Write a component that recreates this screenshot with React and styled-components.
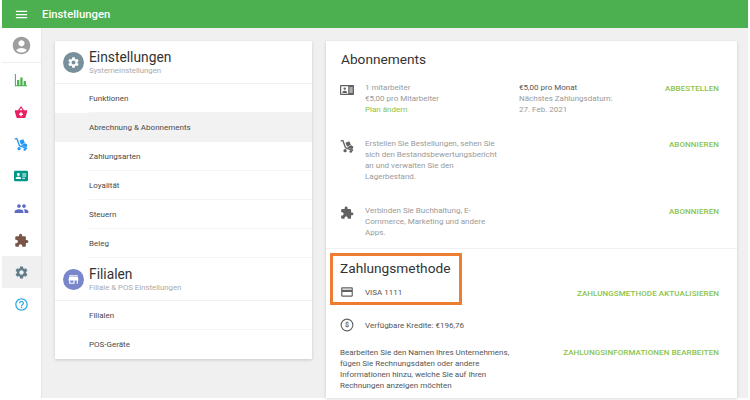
import React from 'react';
import styled, { createGlobalStyle } from 'styled-components';
import { MdMenu, MdAccountCircle, MdPeople, MdExtension, MdSettings, MdHelpOutline, MdStore, MdCreditCard } from 'react-icons/md';

const Global = createGlobalStyle`
  html, body { margin: 0; padding: 0; background: #fff; }
  body { font-family: Roboto, "Liberation Sans", sans-serif; }
  * { box-sizing: border-box; }
`;

const Frame = styled.div`
  position: relative;
  width: 750px;
  height: 400px;
  padding: 0 2px 2px;
  overflow: hidden;
  display: flex;
  flex-direction: column;
`;
const TopBar = styled.header`
  height: 28px;
  flex: none;
  background: #4caf50;
  color: #fff;
  display: flex;
  align-items: center;
  padding-left: 12px;
  gap: 13px;
  font-size: 11.3px;
  font-weight: 500;
  svg { font-size: 15px; }
`;
const Body = styled.div`
  flex: 1;
  min-height: 0;
  display: flex;
  background: #f0f0f0;
`;
const Rail = styled.nav`
  width: 39px;
  flex: none;
  background: #fff;
  display: flex;
  flex-direction: column;
  box-shadow: 1px 0 1px rgba(0,0,0,.04);
`;
const Avatar = styled.div`
  height: 35px;
  display: flex;
  align-items: center;
  justify-content: center;
  color: #9e9e9e;
  border-bottom: 1px solid #eee;
  margin-bottom: 1px;
  svg { font-size: 21px; }
`;
const RailItem = styled.div`
  height: 32px;
  display: flex;
  align-items: center;
  justify-content: center;
  padding-right: 1px;
  color: ${p => p.$color};
  background: ${p => (p.$active ? '#f0f0f0' : 'transparent')};
  svg { width: ${p => p.$size || 14}px; height: ${p => p.$size || 14}px; display: block; }
`;
const Content = styled.main`
  flex: 1;
  display: flex;
  align-items: flex-start;
  padding: 13px 11px 0 14px;
  gap: 14px;
`;
const Card = styled.section`
  background: #fff;
  box-shadow: 0 1px 3px rgba(0,0,0,.16);
`;
const MenuCard = styled(Card)`
  width: 257px;
  flex: none;
`;
const MenuHead = styled.div`
  height: 43px;
  display: flex;
  align-items: center;
  padding-left: 8px;
  gap: 5px;
  border-bottom: 1px solid #f0f0f0;
`;
const HeadIcon = styled.div`
  width: 21px;
  height: 21px;
  border-radius: 50%;
  background: ${p => p.$bg};
  color: #fff;
  display: flex;
  align-items: center;
  justify-content: center;
  svg { font-size: 13px; }
`;
const HeadText = styled.div`
  display: flex;
  flex-direction: column;
`;
const HeadTitle = styled.div`
  font-size: 13.8px;
  line-height: 17px;
  color: #333;
`;
const HeadSub = styled.div`
  font-size: 7.8px;
  line-height: 9px;
  color: #aaa;
`;
const MenuRow = styled.div`
  height: 29px;
  display: flex;
  align-items: center;
  padding-left: 34px;
  font-size: 8px;
  color: #4a4a4a;
  background: ${p => (p.$active ? '#f2f2f2' : 'transparent')};
  position: relative;
  &::after {
    content: '';
    position: absolute;
    left: 34px;
    right: 0;
    bottom: 0;
    height: 1px;
    background: ${p => (p.$flush ? 'transparent' : '#f4f4f4')};
  }
`;
const MainCard = styled(Card)`
  flex: 1;
  height: 357px;
  padding: 0 18px 0 14px;
`;
const MainTitle = styled.h2`
  margin: 0;
  font-size: 13.7px;
  font-weight: 400;
  color: #333;
  line-height: 17px;
  padding: 10px 0 14px 1px;
`;
const SubRow = styled.div`
  display: grid;
  grid-template-columns: 25px 154px 1fr auto;
  align-items: start;
  min-height: ${p => p.$h}px;
`;
const RowIcon = styled.div`
  color: #616161;
  padding-top: 1px;
  svg { width: 14px; height: 14px; display: block; }
`;
const Lines = styled.div`
  font-size: 8px;
  line-height: 11px;
  max-width: ${p => p.$w || 154}px;
  color: #9a9a9a;
`;
const DarkLine = styled.div`
  color: #555;
`;
const GreenLine = styled.div`
  color: #8bc34a;
`;
const Action = styled.div`
  font-size: 8px;
  font-weight: 500;
  line-height: 11px;
  letter-spacing: .08px;
  color: #8bc34a;
  text-align: right;
  white-space: nowrap;
  padding-top: ${p => p.$pt ?? 1}px;
`;
const Divider = styled.div`
  height: 1px;
  background: #f1f1f1;
  margin: 0 -18px 0 -14px;
`;
const PayTitle = styled.h2`
  margin: 0;
  font-size: 13.7px;
  font-weight: 400;
  color: #333;
  line-height: 17px;
  padding: 11px 0 8px;
`;
const PayRow = styled.div`
  display: flex;
  align-items: center;
  height: ${p => p.$h}px;
  margin-top: ${p => p.$mt || 0}px;
`;
const PayIcon = styled.div`
  width: 25px;
  flex: none;
  color: #616161;
  svg { display: block; width: 14px; height: 14px; }
`;
const PayText = styled.div`
  font-size: 8px;
  color: #555;
  flex: 1;
`;
const BillingRow = styled.div`
  display: flex;
  justify-content: space-between;
  align-items: flex-start;
`;
const BillingText = styled.div`
  width: 185px;
  font-size: 8px;
  line-height: 11px;
  color: #555;
`;
const Highlight = styled.div`
  position: absolute;
  left: 330px;
  top: 253px;
  width: 132px;
  height: 52px;
  border: 3px solid #ed7d31;
`;

const Bars = () => (
  <svg viewBox="0 0 16 16" fill="currentColor"><path d="M1 1h1.200v13.500H1zM3.500 8h2.600v6.500H3.500zM7.200 5h2.600v9.500H7.200zM11 9h2.600v5.500H11zM1 14h14v1.200H1z" /></svg>
);
const Basket = () => (
  <svg viewBox="0 0 16 16"><path fill="currentColor" fillRule="evenodd" d="M8 1 4.600 6H1v1.600l1.800 6.400a1 1 0 0 0 1 .8h8.400a1 1 0 0 0 1-.8L15 7.600V6h-3.600L8 1Zm0 2.500L9.700 6H6.300ZM7.200 8.200h1.600v1.500h1.500v1.600H8.800v1.500H7.200v-1.500H5.700V9.700h1.500Z" /></svg>
);
const Dolly = () => (
  <svg viewBox="0 0 16 16" fill="currentColor"><path d="M.6 1.600 3.700.8l3.200 8.600 8.400 3-.6 1.500-9-3.200L2.700 2.700l-1.700.4Z" /><path d="m6.200 4.200 4.400-1.700 1.900 4.400-4.400 1.700ZM8.300 9.200l4.800-2 2.200 1.600-1 3-5.200-1.800Z" /><circle cx="5.800" cy="13.300" r="1.900" /><circle cx="12.300" cy="14.300" r="1.500" /></svg>
);
const IdCard = () => (
  <svg viewBox="0 0 16 16"><path fill="currentColor" fillRule="evenodd" d="M1.500 2h13A1.500 1.500 0 0 1 16 3.500v9a1.500 1.500 0 0 1-1.500 1.500h-13A1.500 1.500 0 0 1 0 12.500v-9A1.500 1.500 0 0 1 1.500 2ZM5 4.500a1.700 1.700 0 1 0 0 3.400 1.700 1.700 0 0 0 0-3.400ZM2 11.500h6v-.8c0-1.300-2-1.800-3-1.800s-3 .5-3 1.800ZM9.500 5v1.200H14V5Zm0 2.500v1.200H14V7.500Zm0 2.500v1.200h3V10Z" /></svg>
);
const IdOutline = () => (
  <svg viewBox="0 0 16 16"><path fill="currentColor" fillRule="evenodd" d="M1 2.300h14a1 1 0 0 1 1 1v9.400a1 1 0 0 1-1 1H1a1 1 0 0 1-1-1V3.300a1 1 0 0 1 1-1Zm.4 1.500v8.400h8V3.800ZM5.400 5a1.400 1.400 0 1 1 0 2.800 1.400 1.400 0 0 1 0-2.800ZM2.700 10.800c0-1.300 1.700-2 2.700-2s2.700.7 2.700 2v.5H2.700ZM10.800 5.200h3.700v1.200h-3.700Zm0 2.200h3.700v1.200h-3.700Zm0 2.200h3.700v1.200h-3.700Z" /></svg>
);
const Credit = () => (
  <svg viewBox="0 0 16 16" fill="none" stroke="currentColor"><circle cx="8" cy="8" r="6.700" strokeWidth="1.300" /><text x="8" y="10.800" textAnchor="middle" fontSize="8" fontWeight="700" fill="currentColor" stroke="none" fontFamily="Roboto, sans-serif">$</text></svg>
);

const rail = [
  { c: '#4caf50', I: Bars },
  { c: '#e91e63', I: Basket },
  { c: '#2196f3', I: Dolly },
  { c: '#009688', I: IdCard },
  { c: '#5c6bc0', I: MdPeople, s: 15 },
  { c: '#795548', I: MdExtension, s: 15 },
  { c: '#607d8b', I: MdSettings, s: 15, active: true },
  { c: '#29a9e8', I: MdHelpOutline, s: 15 },
];

const settings = ['Funktionen', 'Abrechnung & Abonnements', 'Zahlungsarten', 'Loyalität', 'Steuern', 'Beleg'];

export default function App() {
  return (
    <>
      <Global />
      <Frame>
        <TopBar>
          <MdMenu />
          <span>Einstellungen</span>
        </TopBar>
        <Body>
          <Rail>
            <Avatar><MdAccountCircle /></Avatar>
            {rail.map(({ c, I, s, active }, i) => (
              <RailItem key={i} $color={c} $size={s} $active={active}><I /></RailItem>
            ))}
          </Rail>
          <Content>
            <MenuCard>
              <MenuHead>
                <HeadIcon $bg="#78909c"><MdSettings /></HeadIcon>
                <HeadText>
                  <HeadTitle>Einstellungen</HeadTitle>
                  <HeadSub>Systemeinstellungen</HeadSub>
                </HeadText>
              </MenuHead>
              {settings.map((s, i) => (
                <MenuRow key={s} $active={i === 1} $flush={i === 1}>{s}</MenuRow>
              ))}
              <MenuHead>
                <HeadIcon $bg="#7986cb"><MdStore /></HeadIcon>
                <HeadText>
                  <HeadTitle>Filialen</HeadTitle>
                  <HeadSub>Filiale &amp; POS Einstellungen</HeadSub>
                </HeadText>
              </MenuHead>
              <MenuRow>Filialen</MenuRow>
              <MenuRow $flush>POS-Geräte</MenuRow>
            </MenuCard>
            <MainCard>
              <MainTitle>Abonnements</MainTitle>
              <SubRow $h={56}>
                <RowIcon><IdOutline /></RowIcon>
                <Lines>1 mitarbeiter<br />€5,00 pro Mitarbeiter<GreenLine>Plan ändern</GreenLine></Lines>
                <Lines><DarkLine>€5,00 pro Monat</DarkLine>Nächstes Zahlungsdatum:<br />27. Feb. 2021</Lines>
                <Action>ABBESTELLEN</Action>
              </SubRow>
              <SubRow $h={67}>
                <RowIcon><Dolly /></RowIcon>
                <Lines $w={138}>Erstellen Sie Bestellungen, sehen Sie sich den Bestandsbewertungsbericht an und verwalten Sie den Lagerbestand.</Lines>
                <span />
                <Action>ABONNIEREN</Action>
              </SubRow>
              <SubRow $h={43}>
                <RowIcon><MdExtension /></RowIcon>
                <Lines $w={138}>Verbinden Sie Buchhaltung, E-Commerce, Marketing und andere Apps.</Lines>
                <span />
                <Action>ABONNIEREN</Action>
              </SubRow>
              <Divider />
              <PayTitle>Zahlungsmethode</PayTitle>
              <PayRow $h={14}>
                <PayIcon><MdCreditCard /></PayIcon>
                <PayText>VISA 1111</PayText>
                <Action $pt={2}>ZAHLUNGSMETHODE AKTUALISIEREN</Action>
              </PayRow>
              <PayRow $h={44} $mt={4}>
                <PayIcon><Credit /></PayIcon>
                <PayText>Verfügbare Kredite: €196,76</PayText>
              </PayRow>
              <BillingRow>
                <BillingText>Bearbeiten Sie den Namen Ihres Unternehmens, fügen Sie Rechnungsdaten oder andere Informationen hinzu, welche Sie auf Ihren Rechnungen anzeigen möchten</BillingText>
                <Action $pt={0}>ZAHLUNGSINFORMATIONEN BEARBEITEN</Action>
              </BillingRow>
            </MainCard>
          </Content>
        </Body>
        <Highlight />
      </Frame>
    </>
  );
}
